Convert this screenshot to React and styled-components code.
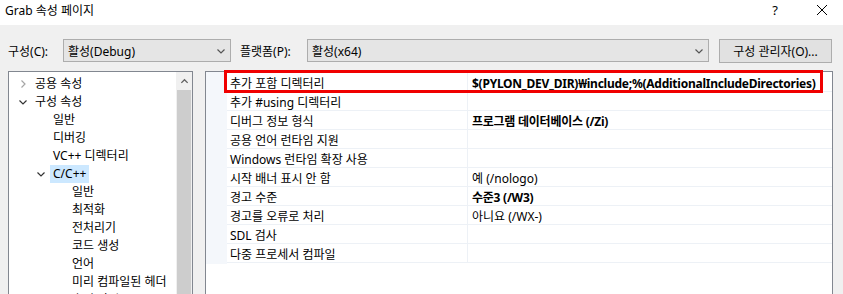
import React from "react";
import styled, { createGlobalStyle } from "styled-components";

const GlobalStyle = createGlobalStyle`
  html, body {
    margin: 0;
    padding: 0;
    background: #f0f0f0;
  }
  body {
    font-family: "Noto Sans", "Noto Sans CJK KR", sans-serif;
    font-size: 12px;
    color: #000;
  }
`;

const indents = [9, 27, 46];

const treeItems = [
  { label: "공용 속성", level: 0, toggle: "closed" },
  { label: "구성 속성", level: 0, toggle: "open" },
  { label: "일반", level: 1 },
  { label: "디버깅", level: 1 },
  { label: "VC++ 디렉터리", level: 1 },
  { label: "C/C++", level: 1, toggle: "open", selected: true },
  { label: "일반", level: 2 },
  { label: "최적화", level: 2 },
  { label: "전처리기", level: 2 },
  { label: "코드 생성", level: 2 },
  { label: "언어", level: 2 },
  { label: "미리 컴파일된 헤더", level: 2 },
  { label: "출력 파일", level: 2 },
];

const props = [
  { name: "추가 포함 디렉터리", value: "$(PYLON_DEV_DIR)₩include;%(AdditionalIncludeDirectories)", bold: true },
  { name: "추가 #using 디렉터리", value: "" },
  { name: "디버그 정보 형식", value: "프로그램 데이터베이스 (/Zi)", bold: true },
  { name: "공용 언어 런타임 지원", value: "" },
  { name: "Windows 런타임 확장 사용", value: "" },
  { name: "시작 배너 표시 안 함", value: "예 (/nologo)" },
  { name: "경고 수준", value: "수준3 (/W3)", bold: true },
  { name: "경고를 오류로 처리", value: "아니요 (/WX-)" },
  { name: "SDL 검사", value: "" },
  { name: "다중 프로세서 컴파일", value: "" },
];

const Chevron = ({ dir = "down", color = "#444", size = 10 }) => (
  <svg width={size} height={size} viewBox="0 0 10 10">
    {dir === "down" && <path d="M1.5 3.5 L5 7 L8.5 3.5" fill="none" stroke={color} strokeWidth="1.2" />}
    {dir === "right" && <path d="M3.5 1.5 L7 5 L3.5 8.5" fill="none" stroke={color} strokeWidth="1.2" />}
    {dir === "up" && <path d="M1.5 6.5 L5 3 L8.5 6.5" fill="none" stroke={color} strokeWidth="1.4" />}
  </svg>
);

const App = () => {
  return (
    <Window>
      <GlobalStyle />
      <TitleBar>
        <Title>Grab 속성 페이지</Title>
        <TitleButtons>
          <TitleButton>?</TitleButton>
          <TitleButton>
            <svg width="12" height="12" viewBox="0 0 12 12">
              <path d="M1 1 L11 11 M11 1 L1 11" stroke="#000" strokeWidth="1" />
            </svg>
          </TitleButton>
        </TitleButtons>
      </TitleBar>

      <Toolbar>
        <Label width={55}>구성(C):</Label>
        <Combo width={168}>
          <span>활성(Debug)</span>
          <Chevron color="#555" />
        </Combo>
        <Label width={67}>플랫폼(P):</Label>
        <Combo width={402}>
          <span>활성(x64)</span>
          <Chevron color="#555" />
        </Combo>
        <Button>구성 관리자(O)...</Button>
      </Toolbar>

      <Body>
        <TreePanel>
          <TreeList>
            {treeItems.map((item, i) => (
              <TreeRow key={i} level={item.level}>
                <Toggle>
                  {item.toggle === "closed" && <Chevron dir="right" color="#a6a6a6" />}
                  {item.toggle === "open" && <Chevron dir="down" color="#333" />}
                </Toggle>
                <TreeLabel selected={item.selected}>{item.label}</TreeLabel>
              </TreeRow>
            ))}
          </TreeList>
          <ScrollBar>
            <ScrollArrow>
              <Chevron dir="up" color="#606060" size={9} />
            </ScrollArrow>
            <ScrollThumb />
          </ScrollBar>
        </TreePanel>

        <GridPanel>
          <Gutter />
          <Grid>
            {props.map((p, i) => (
              <GridRow key={i}>
                <NameCell>{p.name}</NameCell>
                <ValueCell bold={p.bold}>{p.value}</ValueCell>
              </GridRow>
            ))}
            <Highlight />
          </Grid>
        </GridPanel>
      </Body>
    </Window>
  );
};

const Window = styled.div`
  width: 843px;
  height: 294px;
  overflow: hidden;
  display: flex;
  flex-direction: column;
  background: #f0f0f0;
`;

const TitleBar = styled.div`
  height: 25px;
  flex-shrink: 0;
  background: #fff;
  display: flex;
  align-items: center;
  justify-content: space-between;
  padding: 0 6px 6px 5px;
  box-sizing: border-box;
`;

const Title = styled.span`
  font-size: 12px;
`;

const TitleButtons = styled.div`
  display: flex;
  align-items: center;
  gap: 17px;
`;

const TitleButton = styled.div`
  width: 30px;
  display: flex;
  justify-content: center;
  align-items: center;
  font-size: 13px;
`;

const Toolbar = styled.div`
  height: 46px;
  flex-shrink: 0;
  display: flex;
  align-items: center;
  padding: 5px 0 0 8px;
  box-sizing: border-box;
`;

const Label = styled.span`
  width: ${(p) => p.width}px;
  flex-shrink: 0;
  font-size: 12px;
`;

const Combo = styled.div`
  width: ${(p) => p.width}px;
  flex-shrink: 0;
  height: 23px;
  box-sizing: border-box;
  border: 1px solid #adadad;
  background: #e5e5e5;
  display: flex;
  align-items: center;
  justify-content: space-between;
  padding: 0 4px 0 4px;
  margin-right: 9px;
`;

const Button = styled.div`
  width: 113px;
  height: 24px;
  flex-shrink: 0;
  box-sizing: border-box;
  border: 1px solid #adadad;
  background: #e1e1e1;
  display: flex;
  align-items: center;
  justify-content: center;
  margin-left: 1px;
`;

const Body = styled.div`
  flex: 1;
  display: flex;
  padding-left: 8px;
  gap: 12px;
  min-height: 0;
`;

const TreePanel = styled.div`
  width: 185px;
  box-sizing: border-box;
  border: 1px solid #828790;
  border-bottom: none;
  background: #fff;
  display: flex;
  overflow: hidden;
`;

const TreeList = styled.div`
  flex: 1;
  padding-top: 3px;
`;

const TreeRow = styled.div`
  height: 18px;
  display: flex;
  align-items: center;
  padding-left: ${(p) => indents[p.level]}px;
  white-space: nowrap;
`;

const Toggle = styled.span`
  width: 13px;
  display: flex;
  align-items: center;
`;

const TreeLabel = styled.span`
  height: 18px;
  line-height: 18px;
  padding: 0 3px;
  margin-left: 1px;
  background: ${(p) => (p.selected ? "#cce8ff" : "transparent")};
`;

const ScrollBar = styled.div`
  width: 16px;
  flex-shrink: 0;
  background: #f0f0f0;
  display: flex;
  flex-direction: column;
`;

const ScrollArrow = styled.div`
  height: 18px;
  display: flex;
  align-items: center;
  justify-content: center;
`;

const ScrollThumb = styled.div`
  flex: 1;
  margin: 0 1px;
  background: #cdcdcd;
`;

const GridPanel = styled.div`
  width: 628px;
  box-sizing: border-box;
  border: 1px solid #828790;
  border-bottom: none;
  background: #fff;
  display: flex;
`;

const Gutter = styled.div`
  width: 21px;
  height: 192px;
  flex-shrink: 0;
  background: #f4f7fb;
`;

const Grid = styled.div`
  position: relative;
  flex: 1;
  align-self: flex-start;
  padding-top: 1px;
`;

const GridRow = styled.div`
  height: 19px;
  display: grid;
  grid-template-columns: 241px 1fr;
  border-bottom: 1px solid #edf1f6;
  box-sizing: border-box;
`;

const NameCell = styled.div`
  padding: 4px 0 0 3px;
  line-height: 14px;
  white-space: nowrap;
  border-right: 1px solid #edf1f6;
`;

const ValueCell = styled.div`
  padding: 4px 0 0 4px;
  line-height: 14px;
  white-space: nowrap;
  font-weight: ${(p) => (p.bold ? 700 : 400)};
  letter-spacing: ${(p) => (p.bold ? "-0.25px" : "0")};
`;

const Highlight = styled.div`
  position: absolute;
  left: -3px;
  top: -2px;
  width: 599px;
  height: 23px;
  box-sizing: border-box;
  border: 3px solid #f00000;
  pointer-events: none;
`;

export default App;
